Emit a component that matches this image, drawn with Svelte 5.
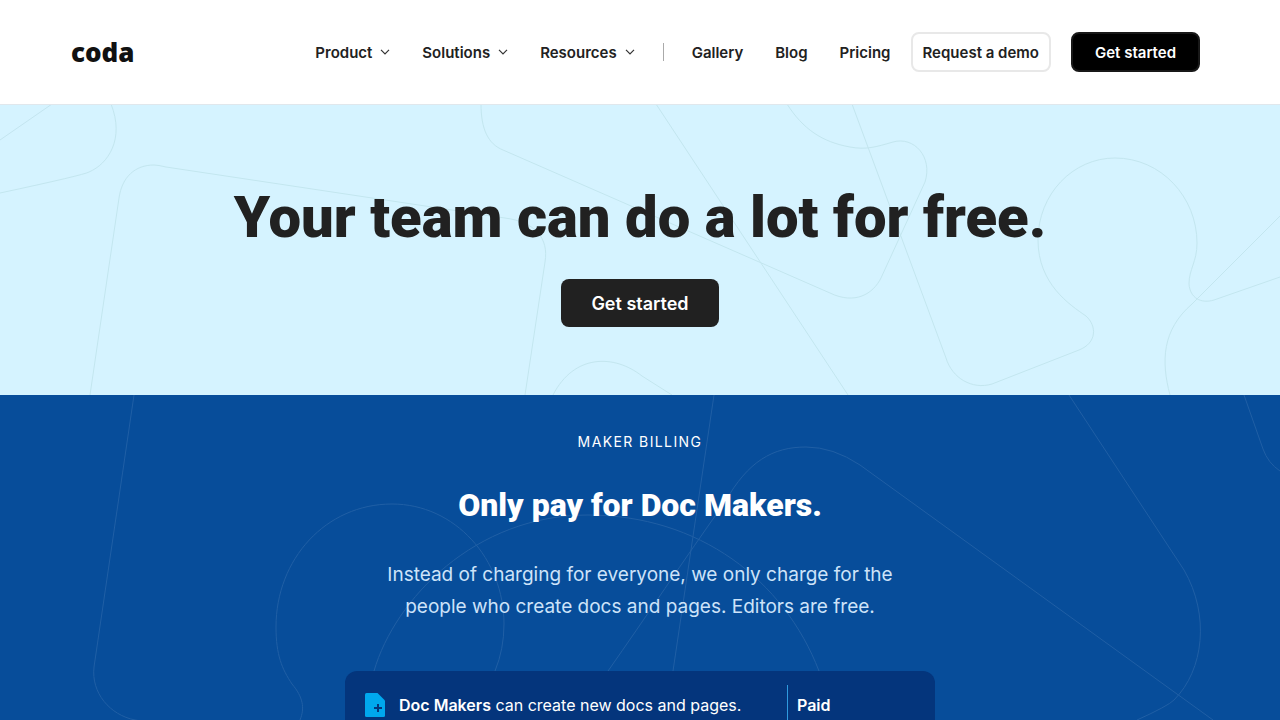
<script lang="ts">
  type NavItem = { label: string; menu: boolean };

  const menus: NavItem[] = [
    { label: 'Product', menu: true },
    { label: 'Solutions', menu: true },
    { label: 'Resources', menu: true },
  ];
  const links: string[] = ['Gallery', 'Blog', 'Pricing'];

  let openMenu = $state('');

  function toggle(label: string): void {
    openMenu = openMenu === label ? '' : label;
  }
</script>

<header>
  <a class="logo" href="#home">coda</a>
  <nav>
    {#each menus as m (m.label)}
      <button class="menu" aria-expanded={openMenu === m.label} onclick={() => toggle(m.label)}>
        {m.label}
        <svg width="10" height="6" viewBox="0 0 10 6" aria-hidden="true">
          <path d="M1 .8 5 4.8 9 .8" />
        </svg>
      </button>
    {/each}
    <span class="rule"></span>
    {#each links as label (label)}
      <a class="link" href="#{label.toLowerCase()}">{label}</a>
    {/each}
  </nav>
  <div class="actions">
    <button class="demo">Request a demo</button>
    <button class="start">Get started</button>
  </div>
</header>

<main>
  <section class="hero">
    <svg class="lines" viewBox="0 1 1280 290" preserveAspectRatio="xMidYMin slice" aria-hidden="true">
      <path d="M0 36 52 0" />
      <path d="M111 0C125 35 108 60 89 68Q84 71 0 89" />
      <path d="M90 291 119 94C122 73 135 61 154 61Q158 61 166 63L505 114C535 118 549 134 545 158L525 291" />
      <path d="M481 0C481 25 488 40 503 46L830 189C855 201 873 190 881 174L925 78C933 53 914 32 893 38C876 43 866 46 850 43C822 38 803 25 787 0" />
      <path d="M656 0 848 291" />
      <path d="M852 0 946 254C952 274 972 286 992 280L1079 246C1097 239 1097 222 1086 212C1070 201 1038 180 1038 136C1038 90 1073 54 1115 54C1161 54 1197 93 1197 139C1197 158 1189 165 1189 180C1190 194 1201 200 1214 196L1280 173" />
      <path d="M1280 112 1192 200C1162 226 1161 257 1170 291" />
      <path d="M553 291C574 250 614 250 642 272L672 291" />
    </svg>
    <h1>Your team can do a lot for free.</h1>
    <button class="cta">Get started</button>
  </section>

  <section class="billing">
    <svg class="lines" viewBox="0 0 1280 325" preserveAspectRatio="xMidYMin slice" aria-hidden="true">
      <path d="M134 0 94 272C91 298 110 320 135 325L185 333" />
      <path d="M300 325C305 313 303 302 292 289C282 274 276 260 276 232C276 164 326 109 392 109C455 109 504 164 504 229Q504 254 495 276" />
      <path d="M374 276C395 204 475 120 588 120C699 120 784 185 819 276" />
      <path d="M714 0 673 276" />
      <path d="M608 276C646 222 683 166 725 107C748 66 773 52 806 52Q833 52 860 70L1213 325" />
      <path d="M1069 0 1184 175C1210 220 1204 275 1174 305Q1168 311 1137 325" />
      <path d="M1244 0 1263 54Q1268 68 1280 76" />
    </svg>
    <p class="eyebrow">MAKER BILLING</p>
    <h2>Only pay for Doc Makers.</h2>
    <p class="lead">Instead of charging for everyone, we only charge for the people who create docs and pages. Editors are free.</p>
    <div class="card">
      <div class="role">
        <svg width="20" height="24" viewBox="0 0 20 24" aria-hidden="true">
          <path class="doc" d="M1.500 0H12.500L20 7.500V22.500Q20 24 18.500 24H1.500Q0 24 0 22.500V1.500Q0 0 1.500 0Z" />
          <path class="plus" d="M13 11V19M9 15H17" />
        </svg>
        <span><strong>Doc Makers</strong> can create new docs and pages.</span>
      </div>
      <strong class="price">Paid</strong>
    </div>
  </section>
</main>

<style>
  :global(body) { margin: 0; background: #fff; }
  :global(#app) { font-family: Inter, "Liberation Sans", sans-serif; color: #212121; }
  button { font: inherit; color: inherit; border: none; background: none; padding: 0; cursor: pointer; }
  a { color: inherit; text-decoration: none; }

  header {
    display: flex; align-items: center; height: 105px; box-sizing: border-box;
    padding: 0 80px 0 71px; border-bottom: 1px solid #e0e7ec;
    font-size: 15px; font-weight: 600; background: #fff;
  }
  .logo { font-family: "Open Sans", sans-serif; font-size: 26px; font-weight: 800; line-height: 32px; color: #111; }
  nav { display: flex; align-items: center; margin-left: auto; gap: 32px; }
  .menu { display: flex; align-items: center; gap: 8px; }
  .menu svg { fill: none; stroke: #333; stroke-width: 1.2; }
  .rule { width: 1px; height: 18px; background: #aaa; margin: 0 -4px; }
  .actions { display: flex; gap: 20px; margin-left: 20px; }
  .actions button { height: 40px; box-sizing: border-box; border-radius: 8px; }
  .demo { border: 2px solid #e8e8e8; padding: 0 10px; }
  .start { background: #000; color: #fff; border: 2px solid #181818; padding: 0 22px; }

  .hero, .billing {
    position: relative; display: flex; flex-direction: column; align-items: center; overflow: hidden;
  }
  .hero { background: #d5f3ff; padding: 72px 24px 68px; }
  .lines { position: absolute; top: 0; left: 0; width: 100%; height: 100%; fill: none; stroke-width: 1; }
  .hero .lines { stroke: #c3e6ef; }
  .billing .lines { stroke: #205fa5; }
  h1, h2, .cta, .eyebrow, .lead, .card { position: relative; }
  h1, h2 { font-family: Roboto, Inter, sans-serif; font-weight: 900; text-align: center; }
  h1 { margin: 0; font-size: 58px; line-height: 80px; }
  .cta {
    margin-top: 22px; height: 48px; padding: 0 30px; border-radius: 8px;
    background: #212121; color: #fff; font-size: 18px; font-weight: 600;
  }

  .billing { background: #074d9a; color: #fff; padding: 36px 24px 0; text-align: center; }
  .eyebrow { margin: 0; font-size: 14px; line-height: 22px; letter-spacing: 0.1em; }
  h2 { margin: 30px 0 0; font-size: 32px; line-height: 44px; }
  .lead { margin: 32px 0 0; max-width: 540px; font-size: 19px; line-height: 32px; color: #cde3f9; }
  .card {
    display: flex; width: 100%; max-width: 590px; box-sizing: border-box; margin-top: 48px;
    padding: 14px 20px 0; border-radius: 12px 12px 0 0;
    background: #04357c; font-size: 16px; line-height: 24px; text-align: left;
  }
  .card strong { font-weight: 600; }
  .role { display: flex; flex: 1; gap: 14px; padding-top: 8px; }
  .doc { fill: #00a8ee; }
  .plus { fill: none; stroke: #04357c; stroke-width: 2; }
  .price { width: 118px; padding: 8px 0 3px 9px; border-left: 1px solid #2f9bdf; }
</style>
